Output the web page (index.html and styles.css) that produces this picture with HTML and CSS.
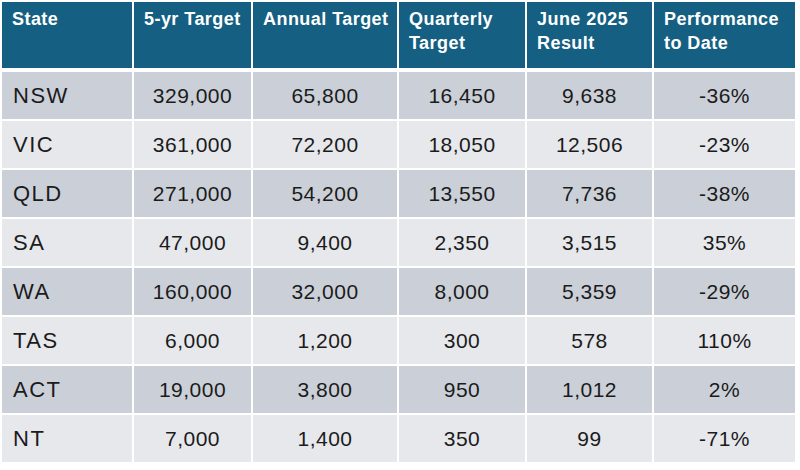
FILE: index.html
```html
<!DOCTYPE html>
<html lang="en">
<head>
<meta charset="utf-8">
<title>State Targets</title>
<link rel="stylesheet" href="styles.css">
</head>
<body>
<table class="targets">
  <colgroup>
    <col class="c-state"><col class="c-5yr"><col class="c-annual"><col class="c-quarter"><col class="c-june"><col class="c-perf">
  </colgroup>
  <thead>
    <tr>
      <th>State</th>
      <th>5-yr Target</th>
      <th>Annual Target</th>
      <th>Quarterly<br>Target</th>
      <th>June 2025<br>Result</th>
      <th>Performance<br>to Date</th>
    </tr>
  </thead>
  <tbody>
    <tr class="dark"><td class="state">NSW</td><td>329,000</td><td>65,800</td><td>16,450</td><td>9,638</td><td>-36%</td></tr>
    <tr class="light"><td class="state">VIC</td><td>361,000</td><td>72,200</td><td>18,050</td><td>12,506</td><td>-23%</td></tr>
    <tr class="dark"><td class="state">QLD</td><td>271,000</td><td>54,200</td><td>13,550</td><td>7,736</td><td>-38%</td></tr>
    <tr class="light"><td class="state">SA</td><td>47,000</td><td>9,400</td><td>2,350</td><td>3,515</td><td>35%</td></tr>
    <tr class="dark"><td class="state">WA</td><td>160,000</td><td>32,000</td><td>8,000</td><td>5,359</td><td>-29%</td></tr>
    <tr class="light"><td class="state">TAS</td><td>6,000</td><td>1,200</td><td>300</td><td>578</td><td>110%</td></tr>
    <tr class="dark"><td class="state">ACT</td><td>19,000</td><td>3,800</td><td>950</td><td>1,012</td><td>2%</td></tr>
    <tr class="light"><td class="state">NT</td><td>7,000</td><td>1,400</td><td>350</td><td>99</td><td>-71%</td></tr>
  </tbody>
</table>
</body>
</html>
```

FILE: styles.css
```css
html, body {
  margin: 0;
  padding: 0;
  background: #ffffff;
}

.targets {
  table-layout: fixed;
  width: 797px;
  border-collapse: separate;
  border-spacing: 2px;
  font-family: "Liberation Sans", Arial, sans-serif;
}

.c-state { width: 130px; }
.c-5yr { width: 117px; }
.c-annual { width: 144px; }
.c-quarter { width: 126px; }
.c-june { width: 125px; }
.c-perf { width: 141px; }

.targets th {
  box-sizing: border-box;
  height: 68px;
  padding: 5px 6px 0 10px;
  background: #156082;
  color: #ffffff;
  font-family: "Liberation Sans", Arial, sans-serif;
  font-weight: 700;
  font-size: 18px;
  line-height: 24px;
  letter-spacing: 0.45px;
  text-align: left;
  vertical-align: top;
  border-bottom: 2px solid #ffffff;
  white-space: nowrap;
}

.targets td {
  box-sizing: border-box;
  height: 47px;
  padding: 0 6px;
  color: #1b1b1b;
  font-size: 21px;
  letter-spacing: 0.5px;
  text-align: center;
  vertical-align: middle;
  white-space: nowrap;
}

.targets td.state {
  text-align: left;
  padding-left: 11px;
  font-size: 22px;
  letter-spacing: 1.5px;
}

.dark td { background: #cbd0d8; }
.light td { background: #e6e8ec; }
```
